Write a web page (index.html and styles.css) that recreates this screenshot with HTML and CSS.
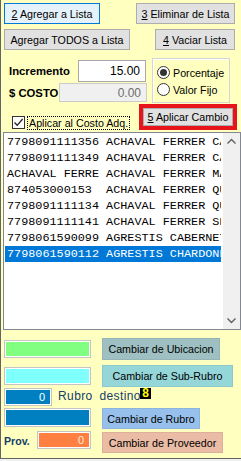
FILE: index.html
```html
<!DOCTYPE html>
<html>
<head>
<meta charset="utf-8">
<link rel="stylesheet" href="styles.css">
</head>
<body>
<div class="win">
  <div class="row r1">
    <div class="btn focus w96"><span><u>2</u> Agregar a Lista</span></div>
    <div class="btn w99"><span><u>3</u> Eliminar de Lista</span></div>
  </div>
  <div class="row r2">
    <div class="btn w126"><span>Agregar TODOS a Lista</span></div>
    <div class="btn w80"><span><u>4</u> Vaciar Lista</span></div>
  </div>
  <div class="params">
    <div class="fields">
      <div class="field f1"><span class="lbl">Incremento</span><span class="inp inc">15.00</span></div>
      <div class="field f2"><span class="lbl">$ COSTO</span><span class="inp dis">0.00</span></div>
    </div>
    <div class="group">
      <div class="radio"><span class="dot on"></span><span>Porcentaje</span></div>
      <div class="radio"><span class="dot"></span><span>Valor Fijo</span></div>
    </div>
  </div>
  <div class="apply">
    <div class="check">
      <span class="box"><svg width="11" height="11" viewBox="0 0 11 11"><path d="M1.5 5.5 L4.2 8.3 L9.6 2" fill="none" stroke="#222" stroke-width="1.3"/></svg></span>
      <span class="focusrect">Aplicar al Costo Adq.</span>
    </div>
    <div class="redframe"><div class="btn fill"><span><u>5</u> Aplicar Cambio</span></div></div>
  </div>
  <div class="list">
    <div class="items">
      <div class="item">7798091111356 ACHAVAL FERRER CA</div>
      <div class="item">7798091111349 ACHAVAL FERRER CA</div>
      <div class="item">ACHAVAL FERRE ACHAVAL FERRER MA</div>
      <div class="item">874053000153  ACHAVAL FERRER QU</div>
      <div class="item">7798091111134 ACHAVAL FERRER QU</div>
      <div class="item">7798091111141 ACHAVAL FERRER SE</div>
      <div class="item">7798061590099 AGRESTIS CABERNET</div>
      <div class="item sel">7798061590112 AGRESTIS CHARDONN</div>
    </div>
    <div class="sb">
      <svg class="arr" width="17" height="17" viewBox="0 0 17 17"><path d="M4.5 10.5 L8.5 6.5 L12.5 10.5" fill="none" stroke="#606060" stroke-width="1.4"/></svg>
      <svg class="arr" width="17" height="17" viewBox="0 0 17 17"><path d="M4.5 6.5 L8.5 10.5 L12.5 6.5" fill="none" stroke="#606060" stroke-width="1.4"/></svg>
    </div>
  </div>
  <div class="brow b1">
    <span class="cbox green"></span>
    <div class="cbtn ubic">Cambiar de Ubicacion</div>
  </div>
  <div class="brow b2">
    <span class="cbox cyan"></span>
    <div class="cbtn sub">Cambiar de Sub-Rubro</div>
  </div>
  <div class="brow b3">
    <span class="cbox blue small">0</span>
    <span class="rubro">Rubro destino</span>
    <span class="eight">8</span>
  </div>
  <div class="brow b4">
    <span class="cbox blue"></span>
    <div class="cbtn rub">Cambiar de Rubro</div>
  </div>
  <div class="brow b5">
    <span class="prov">Prov.</span>
    <span class="cbox orange">0</span>
    <div class="cbtn prv">Cambiar de Proveedor</div>
  </div>
</div>
</body>
</html>
```

FILE: styles.css
```css
html { background: #f0f0f0; }
body { margin: 0; font-family: "Liberation Sans", Arial, sans-serif; font-size: 10.7px; color: #000; }
.win {
  width: 241px; height: 459px; box-sizing: border-box;
  background: #ffffc0;
  border-left: 1px solid #646464;
  border-bottom: 1px solid #646464;
  overflow: hidden;
}
.row { display: flex; justify-content: space-between; padding: 0 6px 0 3px; height: 21px; }
.r1 { padding-top: 3px; }
.r2 { margin-top: 5px; }
.btn {
  box-sizing: border-box; height: 21px;
  background: #e1e1e1; border: 1px solid #adadad;
  display: flex; align-items: center; justify-content: center;
  white-space: nowrap;
}
.btn.focus { background: #e5f1fb; border-color: #0078d7; }
.w96 { width: 96px; }
.w99 { width: 99px; }
.w126 { width: 126px; }
.w80 { width: 80px; }
u { text-decoration: underline; text-underline-offset: 1px; }

.params { display: flex; margin-top: 8px; height: 45px; }
.fields { width: 146px; display: flex; flex-direction: column; }
.field { display: flex; align-items: center; }
.f1 { margin-top: 2px; height: 22px; padding-right: 1px; }
.f2 { margin-top: 1px; height: 19px; }
.lbl { font-weight: bold; font-size: 11.3px; padding-left: 8px; }
.inp {
  margin-left: auto; box-sizing: border-box; height: 100%;
  display: flex; align-items: center; justify-content: flex-end;
  font-size: 12px; border: 1px solid #a8a8a8;
}
.inc { width: 68px; background: #fff; padding-right: 5px; }
.dis { width: 88px; background: #f0f0f0; color: #6d6d6d; border-color: #cccccc; padding-right: 5px; }
.group {
  margin-left: 5px; width: 78px; height: 45px; box-sizing: border-box;
  border: 1px solid #d5d5d5; box-shadow: inset 1px 1px 0 #fff;
  padding: 5px 0 0 4px;
}
.radio { height: 17px; display: flex; align-items: center; gap: 3px; font-size: 10.7px; }
.dot {
  width: 13px; height: 13px; box-sizing: border-box; border-radius: 50%;
  border: 1px solid #333; background: #fff; position: relative;
}
.dot.on::after {
  content: ""; position: absolute; left: 2px; top: 2px; width: 7px; height: 7px;
  border-radius: 50%; background: #333;
}

.apply { display: flex; align-items: flex-end; margin-top: 1px; height: 26px; }
.check { display: flex; align-items: flex-end; margin-left: 11px; gap: 2px; }
.box {
  width: 13px; height: 13px; box-sizing: border-box; border: 1px solid #333; background: #fff;
  display: flex; align-items: center; justify-content: center; margin-bottom: 1px;
}
.focusrect { border: 1px dotted #000; height: 14px; box-sizing: border-box; padding: 0 1px; line-height: 12px; }
.redframe {
  margin-left: auto; margin-right: 4px; width: 98px; height: 26px; box-sizing: border-box;
  border: 4px solid #e8141c;
}
.btn.fill { width: 100%; height: 100%; }

.list {
  margin: 2px 0 0 2px; width: 238px; height: 198px; box-sizing: border-box;
  border: 1px solid #828790; background: #fff; display: flex;
}
.items { flex: 1; overflow: hidden; padding-top: 1px; }
.item {
  margin-left: 1px; width: 216px; height: 16px; line-height: 16px; padding-left: 2px; box-sizing: border-box;
  font-family: "Liberation Mono", "Courier New", monospace; font-size: 11.8px;
  white-space: pre; overflow: hidden;
}
.item.sel { background: #0078d7; color: #fff; }
.sb { width: 17px; background: #f0f0f0; display: flex; flex-direction: column; justify-content: space-between; }
.arr { display: block; }

.brow { display: flex; align-items: center; padding-left: 3px; }
.b1 { margin-top: 8px; height: 22px; }
.b2 { margin-top: 5px; height: 22px; }
.b3 { margin-top: 1px; height: 19px; align-items: flex-start; }
.b4 { margin-top: 1px; height: 21px; align-items: flex-start; }
.b5 { margin-top: 2px; height: 22px; align-items: flex-start; }
.cbox {
  width: 87px; height: 18px; box-sizing: border-box;
  border: 1px solid #c4c4c4; box-shadow: inset 0 0 0 1px #fff;
  display: flex; align-items: center; justify-content: flex-end; padding-right: 6px;
  color: #fff; font-size: 11px;
}
.green { background: #80ff80; }
.cyan { background: #80ffff; }
.blue { background: #0080c0; }
.b4 .blue { height: 19px; }
.small { width: 48px; }
.orange { background: #ff8040; width: 54px; color: #ffe8d8; }
.cbtn {
  margin-left: 11px; height: 22px; box-sizing: border-box;
  display: flex; align-items: center; justify-content: center; white-space: nowrap;
  border: 1px solid rgba(0,0,0,0.06);
}
.ubic { width: 118px; background: #9fc0c3; }
.sub { width: 131px; background: #95d6d9; }
.rub { width: 98px; height: 21px; background: #97c0ec; }
.prv { width: 121px; height: 21px; background: #eabca6; margin-top: 1px; }
.rubro { width: 82px; margin-left: 6px; margin-top: 1px; color: #14406a; font-size: 12px; letter-spacing: 0.4px; word-spacing: 3px; white-space: nowrap; }
.eight {
  width: 11px; height: 11px; background: #000; color: #ffff00;
  font-weight: bold; font-size: 12px; line-height: 11px; text-align: center;
}
.prov { font-weight: bold; font-size: 10.6px; color: #14406a; width: 33px; margin-top: 4px; }
```
